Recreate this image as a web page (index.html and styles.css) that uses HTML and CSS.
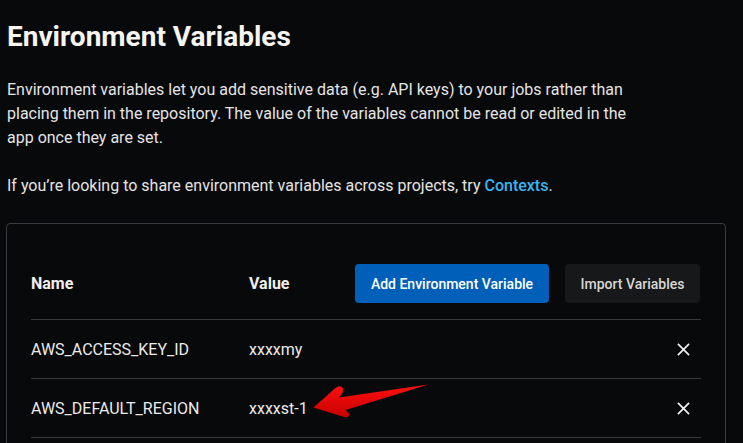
FILE: index.html
```html
<!DOCTYPE html>
<html>
<head>
<meta charset="utf-8">
<link rel="stylesheet" href="styles.css">
</head>
<body>
<div class="page">
  <h1 class="title">Environment Variables</h1>
  <p class="desc">Environment variables let you add sensitive data (e.g. API keys) to your jobs rather than placing them in the repository. The value of the variables cannot be read or edited in the app once they are set.</p>
  <p class="desc hint">If you’re looking to share environment variables across projects, try <a class="link">Contexts</a>.</p>
  <div class="card">
    <div class="head-row">
      <div class="col-name th">Name</div>
      <div class="col-value th">Value</div>
      <div class="actions">
        <button class="btn btn-primary">Add Environment Variable</button>
        <button class="btn btn-secondary">Import Variables</button>
      </div>
    </div>
    <div class="row">
      <div class="col-name">AWS_ACCESS_KEY_ID</div>
      <div class="col-value">xxxxmy</div>
      <svg class="close" viewBox="0 0 14 14"><path d="M1 1L13 13M13 1L1 13" stroke="#f2f2f2" stroke-width="1.8" fill="none"/></svg>
    </div>
    <div class="row">
      <div class="col-name">AWS_DEFAULT_REGION</div>
      <div class="col-value">xxxxst-1</div>
      <svg class="close" viewBox="0 0 14 14"><path d="M1 1L13 13M13 1L1 13" stroke="#f2f2f2" stroke-width="1.8" fill="none"/></svg>
    </div>
  </div>
  <svg class="arrow" viewBox="0 0 130 50" width="130" height="50">
    <defs>
      <linearGradient id="ag" x1="0" y1="0" x2="0" y2="1">
        <stop offset="0" stop-color="#ff1010"/>
        <stop offset="1" stop-color="#c40000"/>
      </linearGradient>
    </defs>
    <path d="M8.5 32.5 L30.5 13 Q35.5 9.5 38 13.5 Q38.5 16 37 19 L34 22.5 L123.5 9.5 L40.5 35 L43.5 37.5 Q45.5 41 42 42 Q40 42.5 37.5 41.5 Z" fill="url(#ag)"/>
  </svg>
</div>
</body>
</html>
```

FILE: styles.css
```css
html, body {
  margin: 0;
  padding: 0;
  background: #08090b;
}
body {
  font-family: Roboto, "Liberation Sans", sans-serif;
  color: #e8e8e8;
  overflow: hidden;
  height: 443px;
}
.page {
  position: relative;
  padding: 0 17px 0 6px;
  height: 443px;
  overflow: hidden;
}
.title {
  margin: 0;
  padding: 20px 0 0 1px;
  font-size: 28px;
  line-height: 34px;
  font-weight: 700;
  color: #f6f4ef;
}
.desc {
  margin: 24px 0 0 1px;
  font-size: 16px;
  line-height: 24px;
  color: #e4e4e4;
  width: 630px;
}
.hint {
  margin-top: 24px;
}
.link {
  color: #3db3f0;
  font-weight: 500;
}
.card {
  margin-top: 25px;
  border: 1px solid #3a3b3e;
  border-radius: 4px;
  padding: 40px 24px 0 24px;
  height: 240px;
}
.head-row {
  display: flex;
  align-items: center;
  padding-bottom: 16px;
  border-bottom: 1px solid #38393b;
}
.col-name {
  width: 218px;
  flex: none;
}
.col-value {
  width: 106px;
  flex: none;
}
.th {
  font-weight: 700;
  font-size: 16px;
  color: #f0efec;
}
.actions {
  display: flex;
  gap: 16px;
}
.btn {
  font-family: Roboto, "Liberation Sans", sans-serif;
  font-size: 14px;
  font-weight: 500;
  height: 39px;
  border: none;
  border-radius: 4px;
  padding: 0;
  white-space: nowrap;
  box-sizing: border-box;
}
.btn-primary {
  background: #005fb8;
  color: #ffffff;
  width: 194px;
}
.btn-secondary {
  background: #16181a;
  color: #d8d6d2;
  width: 135px;
}
.row {
  display: flex;
  align-items: center;
  height: 58px;
  border-bottom: 1px solid #38393b;
  font-size: 16px;
  color: #ecebea;
}
.row .col-value {
  flex: 1;
}
.close {
  width: 13px;
  height: 13px;
  margin-right: 11px;
}
.arrow {
  position: absolute;
  left: 305px;
  top: 375px;
}
```
